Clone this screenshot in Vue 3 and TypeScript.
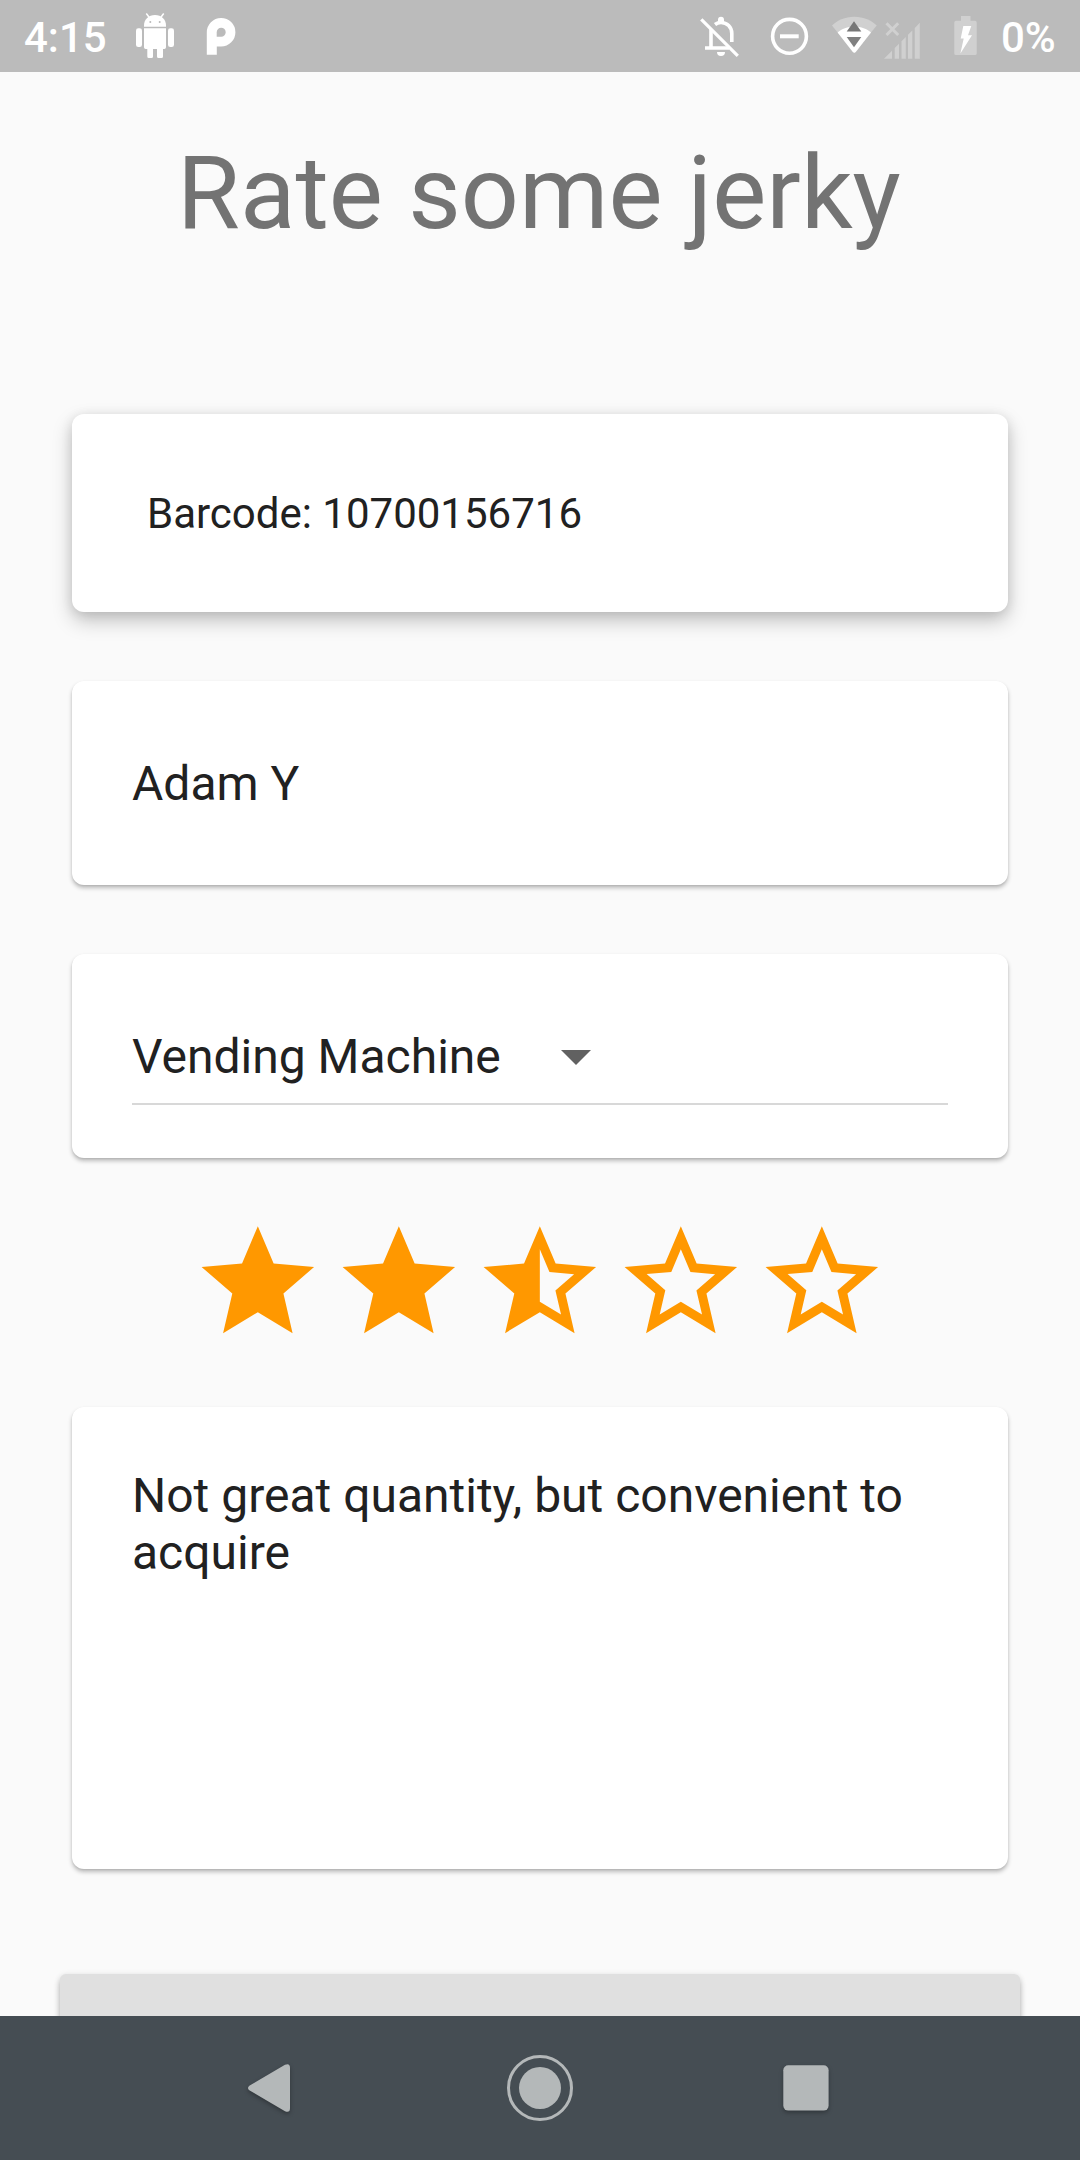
<script setup lang="ts">
import { ref } from 'vue'

type StarKind = 'full' | 'half' | 'empty'

const barcode = ref('10700156716')
const reviewer = ref('Adam Y')
const source = ref('Vending Machine')
const comment = ref('Not great quantity, but convenient to acquire')
const stars: StarKind[] = ['full', 'full', 'half', 'empty', 'empty']

const outline =
  'M22 9.24l-7.19-.62L12 2 9.19 8.63 2 9.24l5.46 4.73L5.82 21 12 17.27 18.18 21l-1.63-7.03L22 9.24z'
const starPaths: Record<StarKind, string> = {
  full: outline,
  half: outline + 'M12 15.4V6.1l1.71 4.04 4.38.38-3.32 2.88 1 4.28L12 15.4z',
  empty:
    outline +
    'M12 15.4l-3.76 2.27 1-4.28-3.32-2.88 4.38-.38L12 6.1l1.71 4.04 4.38.38-3.32 2.88 1 4.28L12 15.4z',
}
</script>

<template>
  <div class="screen">
    <header class="status">
      <span class="clock">4:15</span>
      <svg class="android" width="40" height="48" viewBox="135 12 40 48" fill="#fff">
        <path d="M144 26.8v-1.3c0-6 4.600-10.500 11-10.500s11 4.500 11 10.500v1.300z" />
        <path d="M146.300 13.500l3 4M163.700 13.500l-3 4" stroke="#fff" stroke-width="1.500" />
        <circle cx="150.300" cy="22" r="1" fill="#bbb" />
        <circle cx="159.700" cy="22" r="1" fill="#bbb" />
        <path d="M144 28.300h22v19a1.700 1.700 0 0 1-1.700 1.700H163v7.500a1.500 1.500 0 0 1-1.500 1.500h-3a1.500 1.500 0 0 1-1.500-1.500V49h-4v7.500a1.500 1.500 0 0 1-1.500 1.500h-2.700a1.500 1.500 0 0 1-1.500-1.500V49h-1.600a1.700 1.700 0 0 1-1.700-1.700z" />
        <rect x="136" y="28.300" width="6" height="18.700" rx="2.300" />
        <rect x="168" y="28.300" width="6" height="18.700" rx="2.300" />
      </svg>
      <svg class="pie" width="32" height="40" viewBox="205 16 32 40">
        <path fill="#fff" fill-rule="evenodd" d="M206.800 54.700V32.300a14.300 14.300 0 1 1 14.300 14.200h-4.300v8.200zM216.700 36.700h4.400a4.500 4.500 0 1 0-4.400-4.500z" />
      </svg>
      <svg class="indicators" width="290" height="52" viewBox="695 10 290 52">
        <g fill="none" stroke="#fff" stroke-width="3.600">
          <path d="M711 29v19M705 48h24M715 24.500c2-1.500 3.800-2 6-2 6 0 10.800 4.500 10.800 11V42" />
          <path d="M701.300 19.300l36.500 36.500" stroke-width="3.300" />
          <circle cx="789.500" cy="36.300" r="16.900" />
          <path d="M780 36.300h18.700" stroke-width="4" />
        </g>
        <g fill="#fff">
          <path d="M718 22v-2.300a3 3 0 0 1 6 0V22zM717 52h8a4 4 0 0 1-8 0z" />
        </g>
        <path d="M854.300 53L832 25.500c5-5 13-8.700 22.300-8.700s17.400 3.700 22.400 8.700z" fill="#d0d0d0" />
        <path d="M852.800 52L837.600 32.500c4-3.500 10-6 16.700-6s12.700 2.500 16.700 6L855.800 52q-1.500 1.500-3 0z" fill="#fff" />
        <path d="M854 21.300l7.300 10.200h-14.600z" fill="#777" />
        <path d="M854 47.200l-7.300-10.200h14.600z" fill="#808080" />
        <g fill="#d0d0d0">
          <path d="M884 58.700l8-8v8zM894.700 58.700V48.100l4.300-4.300v14.900zM901.500 58.700V41.300l4.300-4.300v21.700zM908 58.700V34.700l4.300-4.300v28.300zM914.800 58.700V27.900l5-5.100v35.900z" />
          <path d="M961 16h9.500v4.700h4.500a1.700 1.700 0 0 1 1.700 1.700v31a1.700 1.700 0 0 1-1.700 1.700h-19a1.700 1.700 0 0 1-1.700-1.700v-31a1.700 1.700 0 0 1 1.700-1.700h5z" />
        </g>
        <path d="M886.500 23.300l11.700 11.700M898.200 23.300L886.500 35" stroke="#d0d0d0" stroke-width="3" />
        <path d="M963.300 26h8l-3.300 9.300h4L960.400 53.400l3.300-15h-3z" fill="#fff" />
      </svg>
      <span class="percent">0%</span>
    </header>

    <main class="body">
      <h1 class="title">Rate some jerky</h1>
      <section class="card barcode">Barcode: {{ barcode }}</section>
      <section class="card field">{{ reviewer }}</section>
      <section class="card picker">
        <div class="select">
          <span>{{ source }}</span>
          <svg width="72" height="72" viewBox="0 0 24 24" fill="#616161"><path d="M7 10l5 5 5-5z" /></svg>
        </div>
      </section>
      <div class="rating">
        <svg v-for="(kind, i) in stars" :key="i" width="135" height="135" viewBox="-0.06 0 24 24">
          <path :d="starPaths[kind]" fill="#ff9800" fill-rule="evenodd" />
        </svg>
      </div>
      <section class="card comment">{{ comment }}</section>
      <div class="submit"></div>
    </main>

    <nav class="nav">
      <svg width="1080" height="144" viewBox="0 0 1080 144">
        <g fill="#b4b8b9">
          <path class="raised" d="M249.300 69.700L285 48.700q5-2 5 3v40.600q0 5-5 3L249.300 74.300q-2.600-2.300 0-4.600z" />
          <circle cx="540" cy="72" r="21" />
          <circle cx="540" cy="72" r="31.500" fill="none" stroke="#b4b8b9" stroke-width="3" />
          <rect class="raised" x="783.300" y="49.300" width="45.300" height="45.300" rx="5" />
        </g>
      </svg>
    </nav>
  </div>
</template>

<style>
body {
  margin: 0;
  background: #fafafa;
}
</style>

<style scoped>
.screen {
  width: 1080px;
  height: 2160px;
  display: flex;
  flex-direction: column;
  overflow: hidden;
  background: #fafafa;
  color: #212121;
  font-family: Roboto, 'Liberation Sans', sans-serif;
}
.status {
  flex: none;
  display: flex;
  align-items: center;
  box-sizing: border-box;
  height: 72px;
  padding: 0 25px 0 24px;
  background: #bbb;
  color: #fff;
  font-size: 42px;
  font-weight: 500;
  line-height: 72px;
}
.clock,
.percent {
  padding-top: 3px;
}
.clock {
  width: 111px;
}
.pie {
  margin-left: 30px;
}
.indicators {
  margin-left: auto;
}
.percent {
  width: 55px;
  margin-left: 16px;
  margin-right: -1px;
}
.body {
  flex: 1;
  min-height: 0;
  overflow: hidden;
  display: flex;
  flex-direction: column;
  padding: 0 60px;
}
.title {
  margin: 61px 0 161px;
  padding-right: 2px;
  font-size: 102px;
  font-weight: 400;
  line-height: 120px;
  text-align: center;
  color: #737373;
}
.card {
  flex: none;
  box-sizing: border-box;
  margin: 0 12px;
  border-radius: 12px;
  background: #fff;
  font-size: 48px;
  box-shadow: 0 3px 4px rgba(0, 0, 0, 0.25), 0 1px 2px rgba(0, 0, 0, 0.08);
}
.barcode {
  height: 198px;
  padding-left: 75px;
  font-size: 42px;
  line-height: 200px;
  box-shadow: 0 9px 20px rgba(0, 0, 0, 0.22), 0 2px 12px rgba(0, 0, 0, 0.1);
}
.field {
  height: 204px;
  margin-top: 69px;
  padding-left: 60px;
  line-height: 206px;
}
.picker {
  height: 204px;
  margin-top: 69px;
  padding: 54px 60px 0;
}
.select {
  display: flex;
  align-items: center;
  height: 95px;
  border-bottom: 2px solid #d8d8d8;
}
.select span {
  padding-top: 2px;
}
.select svg {
  margin-left: 39px;
}
.rating {
  flex: none;
  display: flex;
  justify-content: center;
  gap: 6px;
  margin: 57px 0;
  padding-right: 1px;
}
.comment {
  height: 462px;
  padding: 60px 60px 0;
  line-height: 57px;
}
.submit {
  flex: none;
  height: 108px;
  margin-top: 105px;
  border-radius: 6px;
  background: #e0e0e0;
  box-shadow: 0 5px 6px rgba(0, 0, 0, 0.25), 0 1px 6px rgba(0, 0, 0, 0.1);
}
.nav {
  flex: none;
  height: 144px;
  background: #454d53;
}
.nav svg {
  display: block;
}
.raised {
  filter: drop-shadow(0 2px 2px rgba(0, 0, 0, 0.3));
}
</style>
